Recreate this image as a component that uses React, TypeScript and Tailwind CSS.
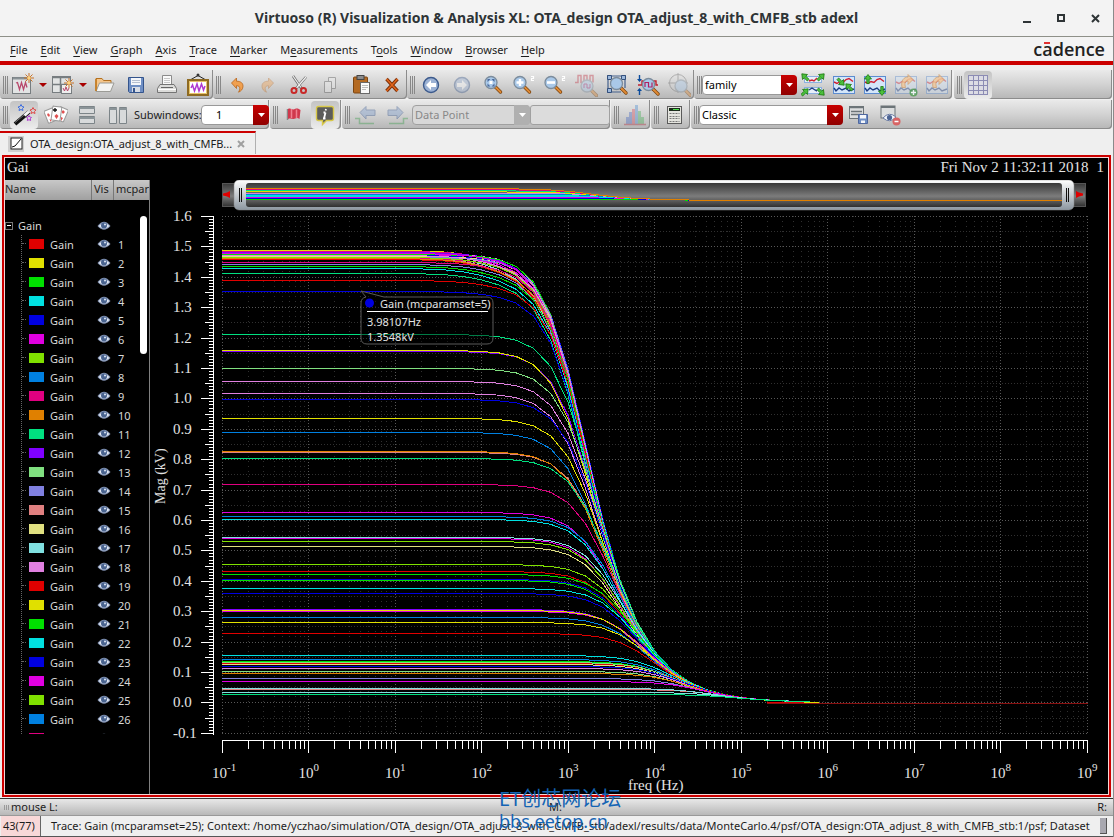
import type { ReactNode } from 'react'
import clsx from 'clsx'

const menus = [
  ['', 'F', 'ile'],
  ['', 'E', 'dit'],
  ['', 'V', 'iew'],
  ['', 'G', 'raph'],
  ['', 'A', 'xis'],
  ['', 'T', 'race'],
  ['', 'M', 'arker'],
  ['M', 'e', 'asurements'],
  ['T', 'o', 'ols'],
  ['', 'W', 'indow'],
  ['', 'B', 'rowser'],
  ['', 'H', 'elp'],
]

const palette = [
  '#e00000', '#e0e000', '#00e000', '#00e0e0', '#0000e0', '#e000e0', '#80e000', '#0080e0', '#e00080',
  '#e08000', '#00e080', '#8000ff', '#80e080', '#8080e0', '#e08080', '#e0e080', '#80e0e0', '#e080e0',
]

const traces = Array.from({ length: 27 }, (_, i) => ({ id: i + 1, color: palette[i % palette.length] }))

/* ---------- icons ---------- */

function Glyph({ children, faded }: { children: ReactNode; faded?: boolean }) {
  return (
    <svg width="24" height="24" viewBox="0 0 24 24" fill="none" aria-hidden="true" className={clsx('shrink-0', faded && 'opacity-40')}>
      {children}
    </svg>
  )
}

const Spark = ({ x, y }: { x: number; y: number }) => (
  <g transform={`translate(${x} ${y})`}>
    <path d="M0-5V5M-5 0H5M-3.500-3.500L3.500 3.500M3.500-3.500L-3.500 3.500" stroke="#c8732a" />
    <circle r="1.800" fill="#ffd27a" />
  </g>
)

const NewWindowIcon = () => (
  <Glyph>
    <rect x="1.500" y="4.500" width="18" height="16" fill="#e2e4e4" stroke="#777d80" />
    <path d="M2 5.500h17" stroke="#8a9296" strokeWidth="2" />
    <path d="M5 10l1.500-.5 2 7 2-7 2 7 2-7 1.500 5" stroke="#b8486c" strokeWidth="1.300" />
    <Spark x={18} y={5} />
  </Glyph>
)

const NewSubwindowIcon = () => (
  <Glyph>
    <rect x="1.500" y="3.500" width="18" height="16" fill="#e2e4e4" stroke="#777d80" />
    <path d="M2 4.500h17M2 11.500h17M9.500 4v15" stroke="#777d80" strokeWidth="1.500" />
    <rect x="10.500" y="11.500" width="10" height="9" fill="#eee" stroke="#777d80" />
    <path d="M12 15l1.500 3 1.500-4 1.500 4 1.500-3" stroke="#b8486c" />
    <Spark x={18} y={10} />
  </Glyph>
)

const FolderIcon = () => (
  <Glyph>
    <path d="M3 18V5.500h6l1.500 2H18V10" fill="#f4c58a" stroke="#b4701e" />
    <path d="M3 18.500L6.500 10H21l-3.500 8.500z" fill="#f3f3f1" stroke="#9b9b96" />
    <path d="M3 18V6" stroke="#c57a1c" strokeWidth="1.500" />
  </Glyph>
)

const SaveIcon = () => (
  <Glyph>
    <path d="M4.500 4.500h15v15h-14l-1-1z" fill="#6f8fc4" stroke="#34548c" />
    <rect x="7" y="5" width="10" height="7" fill="#f4f6fa" />
    <path d="M8 7.500h8M8 9.500h8" stroke="#b5bfd0" />
    <rect x="8" y="14" width="8" height="5" fill="#d8dde6" />
    <rect x="9" y="15" width="2" height="4" fill="#34548c" />
  </Glyph>
)

const PrinterIcon = () => (
  <Glyph>
    <path d="M7.500 12V2.500h9V12" fill="#fafafa" stroke="#8b8b8b" />
    <path d="M9 5.500h6M9 7.500h6M9 9.500h6" stroke="#c8c8c8" />
    <path d="M5 11.500h14l2.500 4v4h-19v-4z" fill="#dcdcda" stroke="#747474" />
    <path d="M3 16.500h18" stroke="#fff" />
    <path d="M6 14.500h12" stroke="#666" />
  </Glyph>
)

const WaveBoardIcon = () => (
  <Glyph>
    <path d="M5 6.500l7-4 7 4" stroke="#222" />
    <circle cx="12" cy="2" r="1.500" fill="#333" />
    <rect x="2" y="7" width="20" height="15" fill="#fff" stroke="#8e6a22" strokeWidth="2" />
    <rect x="3.500" y="8.500" width="17" height="12" stroke="#e8c468" />
    <path d="M5 15l1.500-3 2 6 2.500-7 2 7 2.500-7 2 6 1.500-4" stroke="#b03ad0" strokeWidth="1.500" />
  </Glyph>
)

const UndoIcon = ({ flip }: { flip?: boolean }) => (
  <Glyph faded={flip}>
    <g transform={flip ? 'translate(24 0) scale(-1 1)' : undefined}>
      <path d="M6.500 10l5-5v3.200c4.500 0 6.500 2 6.500 5 0 3-2 5-4.500 6 2-3 2-6.500-2-6.500V15.500z" fill="#f0a050" stroke="#b8641c" strokeWidth=".8" />
    </g>
  </Glyph>
)

const ScissorsIcon = () => (
  <Glyph>
    <path d="M6 3l8.500 12.500M19 4L9 15.500" stroke="#6c6c6c" strokeWidth="2.600" />
    <path d="M6 3l8 11.500M19 4L9.500 15" stroke="#f0f0f0" strokeWidth="1.200" />
    <circle cx="7" cy="17.500" r="2.500" stroke="#c82828" strokeWidth="2" />
    <circle cx="16.500" cy="17.500" r="2.500" stroke="#c82828" strokeWidth="2" />
  </Glyph>
)

const CopyIcon = () => (
  <Glyph faded>
    <path d="M10.500 4.500h7v11h-7z" fill="#eee" stroke="#555" />
    <path d="M6.500 8.500h7v11h-7z" fill="#eee" stroke="#555" />
  </Glyph>
)

const PasteIcon = () => (
  <Glyph>
    <rect x="4.500" y="4" width="14" height="16" rx="1" fill="#b46a22" stroke="#7c4510" />
    <rect x="8" y="2.500" width="7" height="4" fill="#8b8b8b" stroke="#444" />
    <rect x="11.500" y="9.500" width="9" height="11" fill="#fafafa" stroke="#6a6a6a" />
    <path d="M13 12.500h6M13 14.500h6M13 16.500h4" stroke="#bbb" />
  </Glyph>
)

const DeleteIcon = () => (
  <Glyph>
    <path d="M6.500 6l11 12M17.500 6l-11 12" stroke="#7a2f08" strokeWidth="3.400" />
    <path d="M6.500 6l11 12M17.500 6l-11 12" stroke="#e0641c" strokeWidth="1.600" />
  </Glyph>
)

const NavIcon = ({ forward }: { forward?: boolean }) => (
  <Glyph faded={forward}>
    <circle cx="12" cy="12" r="7.500" fill="#9cb2d4" stroke="#3c5a8c" strokeWidth="1.400" />
    <path d={forward ? 'M17 12l-5-5v3H7v4h5v3z' : 'M7 12l5-5v3h5v4h-5v3z'} fill="#fff" />
  </Glyph>
)

const Lens = ({ x = 10, y = 9.5, children }: { x?: number; y?: number; children?: ReactNode }) => (
  <>
    <path d={`M${x + 4.5} ${y + 4.5}l5 5`} stroke="#7c4510" strokeWidth="3.400" strokeLinecap="round" />
    <path d={`M${x + 5} ${y + 5}l4.500 4.500`} stroke="#e08a34" strokeWidth="1.800" strokeLinecap="round" />
    <circle cx={x} cy={y} r="6" fill="#a9c8e8" stroke="#7c8c9c" strokeWidth="1.300" />
    {children}
  </>
)

const Squared = () => (
  <path d="M19 3.500h2.500v2h-2v2H22" stroke="#fff" strokeWidth="1.200" />
)

const ZoomFitIcon = () => (
  <Glyph>
    <Lens>
      <path d="M6.500 9l3-3h-3zM13.500 9V6h-3zM6.500 10.500v3h3zM13.500 10.500v3h-3z" fill="#4c6a9c" />
      <rect x="8.500" y="8" width="3" height="3" fill="#fff" />
    </Lens>
  </Glyph>
)

const ZoomInIcon = () => (
  <Glyph>
    <Lens x={8}><path d="M8 6v7M4.500 9.500h7" stroke="#fff" strokeWidth="2.400" /></Lens>
    <Squared />
  </Glyph>
)

const ZoomOutIcon = () => (
  <Glyph>
    <Lens x={8}><path d="M4 9.500h8" stroke="#fff" strokeWidth="2.600" /></Lens>
    <Squared />
  </Glyph>
)

const ZoomWaveIcon = () => (
  <Glyph faded>
    <path d="M1 9.500h3v-7h3v7h3v-7h3v7h3v-7h3v7" stroke="#c03040" strokeWidth="1.400" />
    <Lens x={13} y={13}><path d="M10 15v-4h3v4h3v-4" stroke="#a02070" /></Lens>
  </Glyph>
)

const ZoomAreaIcon = () => (
  <Glyph>
    <path d="M3 2v18M20 2v13M2 3h19M2 19h14" stroke="#44608c" strokeWidth="1.200" />
    <path d="M2.500 2.500h4v4h-4zM16.500 2.500h4v4h-4zM2.500 15.500h4v4h-4z" fill="#9cb8dc" stroke="#34507c" />
    <Lens x={11.5} y={10.5} />
  </Glyph>
)

const ZoomAxisIcon = () => (
  <Glyph>
    <path d="M3.500 2v6M3.500 22v-6" stroke="#0c4c9c" strokeWidth="1.400" />
    <path d="M1 6h5l-2.500 3zM1 18h5l-2.500-3z" fill="#0c4c9c" />
    <path d="M2 12h4V8h4M17 8h3v4h2" stroke="#c02030" strokeWidth="1.400" />
    <Lens x={12.5} y={11.5}><path d="M9 14V9.500h3.500V14H16V9.500" stroke="#b02060" strokeWidth="1.200" /></Lens>
  </Glyph>
)

const ZoomTargetIcon = () => (
  <Glyph faded>
    <circle cx="11" cy="10" r="8.500" stroke="#666" />
    <path d="M11 0v20M1 10h20" stroke="#666" />
    <Lens x={14} y={13} />
  </Glyph>
)

const StripBox = () => (
  <>
    <rect x="1.500" y="3.500" width="21" height="17" fill="#d4e6fa" stroke="#5c8cd0" />
    <path d="M2 9l3 1.500 3-2 3 1 3-3 3-1 4 3" stroke="#d02030" strokeWidth="1.400" />
    <path d="M2 15l2 3 3-3 3 2 4-2 3 3 5-2" stroke="#1c3c84" strokeWidth="1.400" />
  </>
)

const Arrow = ({ x, y, angle }: { x: number; y: number; angle: number }) => (
  <path transform={`translate(${x} ${y}) rotate(${angle})`} d="M0-4.500L3.500 0H1.200V4.500h-2.400V0h-2.300z" fill="#4cc03c" stroke="#1c7812" strokeWidth=".8" />
)

const StripSplitIcon = () => (
  <Glyph>
    <rect x="3.500" y="3.500" width="17" height="6" fill="#e8effa" stroke="#8cb0e0" />
    <rect x="3.500" y="14.500" width="17" height="6" fill="#e8effa" stroke="#8cb0e0" />
    <path d="M8 8l3-1 2 1 3-3" stroke="#d02030" strokeWidth="1.400" />
    <path d="M8 17l3-2 3 2 2 1" stroke="#1c3c84" strokeWidth="1.400" />
    <Arrow x={4} y={4} angle={-45} />
    <Arrow x={20} y={4} angle={45} />
    <Arrow x={4} y={19} angle={45} />
    <Arrow x={20} y={19} angle={135} />
  </Glyph>
)

const StripMergeIcon = () => (
  <Glyph>
    <StripBox />
    <Arrow x={9} y={9} angle={135} />
    <Arrow x={17} y={14} angle={-45} />
  </Glyph>
)

const StripSwapIcon = () => (
  <Glyph>
    <StripBox />
    <Arrow x={5} y={6} angle={0} />
    <Arrow x={19} y={18} angle={180} />
  </Glyph>
)

const ReloadIcon = ({ add }: { add?: boolean }) => (
  <Glyph>
    <g opacity=".4">
      <StripBox />
    </g>
    <path opacity=".7" d="M8 14.500c-1.500-7 2-10.500 6-10.500V1.500l5 5-5 5V8c-3.500 0-3.500 2.500-2.500 6.500z" fill="#f6c48c" stroke="#cc8c4c" strokeWidth=".8" />
    {add && (
      <g opacity=".75">
        <circle cx="19.500" cy="19.500" r="4" fill="#4c9c4c" />
        <path d="M19.500 17v5M17 19.500h5" stroke="#fff" strokeWidth="1.400" />
      </g>
    )}
  </Glyph>
)

const GridIcon = () => (
  <Glyph>
    <rect x="2.500" y="2.500" width="19" height="19" fill="#dcdce4" stroke="#8c8cb4" />
    <path d="M2.500 7.500h19M2.500 12.500h19M2.500 17.500h19M7.500 2.500v19M12.500 2.500v19M17.500 2.500v19" stroke="#8c8cb4" />
  </Glyph>
)

const WandIcon = () => (
  <Glyph>
    <path d="M3 21L17 9" stroke="#111" strokeWidth="4" />
    <path d="M12.500 12.500L17 8.500" stroke="#f4f4f4" strokeWidth="3" />
    <path d="M3 19.500L12 12" stroke="#777" />
    <path d="M9 1.500l1 2 2 .5-1.500 1.500.5 2-2-1-2 1 .5-2L6 4l2-.5z" stroke="#3c6ce0" />
    <path d="M21 4.500l1 2 2 .5-1.500 1.500.5 2-2-1-2 1 .5-2L18 7l2-.5z" stroke="#e04848" />
    <path d="M17 12.500l.8 1.500 1.700.5-1.200 1.200.3 1.800-1.600-.8-1.600.8.3-1.800-1.200-1.200 1.700-.5z" stroke="#b03cd0" />
  </Glyph>
)

const CardsIcon = () => (
  <Glyph>
    <rect x="2" y="6" width="10" height="13" rx="1" transform="rotate(-22 7 13)" fill="#fff" stroke="#999" />
    <rect x="13" y="5" width="9" height="13" rx="1" transform="rotate(24 18 12)" fill="#fff" stroke="#999" />
    <rect x="8" y="3.500" width="9" height="14" rx="1" transform="rotate(8 12 10)" fill="#fff" stroke="#999" />
    <path d="M11 5v4M9 7h4" stroke="#111" strokeWidth="1.300" />
    <path d="M4 10l2 2-1 2-2-2zM5.500 16l2 1-1 2zM19 7l2 2-2 2-1.500-2zM17 14l2 1-2 3zM12.500 11l2 2-2 3-2-3z" fill="#e05050" />
  </Glyph>
)

const RowsIcon = () => (
  <Glyph>
    <path d="M4.500 3.500h15v7h-15zM4.500 13.500h15v7h-15z" fill="#d8dadb" stroke="#7c8488" />
    <path d="M4 5h16M4 15h16" stroke="#8b9498" strokeWidth="2" />
  </Glyph>
)

const ColumnsIcon = () => (
  <Glyph>
    <path d="M3.500 4.500h7v16h-7zM13.500 4.500h7v16h-7z" fill="#d8dadb" stroke="#7c8488" />
    <path d="M3 6h8M13 6h8" stroke="#8b9498" strokeWidth="2" />
  </Glyph>
)

const FlagIcon = () => (
  <Glyph>
    <path d="M5.500 6v11" stroke="#888" strokeWidth="1.500" />
    <path d="M6 6c3-1.500 4 1.500 7 0 2-1 4 0 5.500 1l-1 9c-3-2-4 0-6 0s-3-1-5.500 0z" fill="#d0384c" />
    <path d="M9.500 6v9M14.500 6.500V15" stroke="#f08090" strokeWidth="1.500" />
  </Glyph>
)

const InfoIcon = () => (
  <Glyph>
    <path d="M5.500 3.500h13q2 0 2 2v10q0 2-2 2h-5l-4 4v-4h-4q-2 0-2-2v-10q0-2 2-2z" fill="#5c5c5a" stroke="#d8c848" strokeWidth="1.400" />
    <path d="M13 6l-.4 1.500M12.500 9.500l-1.500 6M10.500 9.500h2M10 15.500h2.500" stroke="#fff" strokeWidth="1.800" />
  </Glyph>
)

const StepIcon = ({ forward }: { forward?: boolean }) => (
  <Glyph faded>
    <g transform={forward ? 'translate(24 0) scale(-1 1)' : undefined}>
      <path d="M6 9.500l6-6V7h9v5.500h-9V16z" fill="#7c9ccc" stroke="#34548c" />
      <path d="M1 15.500h4.500v5H20" stroke="#3c9c4c" strokeWidth="1.500" />
    </g>
  </Glyph>
)

const HistogramIcon = () => (
  <Glyph faded>
    <path d="M3 14h3v7H3zM6 9h3v12H6z" fill="#4c6cc0" />
    <path d="M9 6h3v15H9z" fill="#d05060" />
    <path d="M12 2h3v19h-3z" fill="#4c8cd0" />
    <path d="M15 8h3v13h-3zM18 14h3v7h-3z" fill="#4cb05c" />
    <path d="M1 21.500h22" stroke="#b03040" strokeWidth="1.500" />
  </Glyph>
)

const CalculatorIcon = () => (
  <Glyph>
    <rect x="4.500" y="3.500" width="14" height="17" fill="#e4e4de" stroke="#5a5a5a" />
    <rect x="6" y="5" width="11" height="3" fill="#1c2c1c" />
    <path d="M10 6.500h6" stroke="#4ce04c" />
    <path d="M6.500 10.500h10M6.500 13.500h10M6.500 15.500h10M6.500 18.500h10" stroke="#777" strokeDasharray="2 1" />
  </Glyph>
)

const PanelSaveIcon = () => (
  <Glyph>
    <rect x="2.500" y="3.500" width="14" height="12" fill="#dcdedf" stroke="#6c7478" />
    <path d="M2 4.500h15M4 8.500h11M4 11.500h11" stroke="#6c7478" strokeWidth="1.300" />
    <path d="M11.500 11.500h9v9h-9z" fill="#6f8fc4" stroke="#5068a0" />
    <path d="M13 12h6v3.500h-6zM14 17.500h4V20h-4z" fill="#f4f6fa" />
  </Glyph>
)

const PanelHideIcon = () => (
  <Glyph>
    <rect x="3" y="3" width="14" height="12" fill="#dcdedf" stroke="#6c7478" />
    <path d="M3 4h14" stroke="#6c7478" strokeWidth="2" />
    <path d="M5 15q6-7 13-1-6 7-13 1z" fill="#f0f4fa" stroke="#6c7ca4" />
    <circle cx="11.500" cy="14.500" r="2.600" fill="#4c6494" />
    <circle cx="18.500" cy="18.500" r="4" fill="#d86464" />
    <path d="M16.500 18.500h4" stroke="#fff" strokeWidth="1.500" />
  </Glyph>
)

const EyeIcon = () => (
  <svg width="14" height="12" viewBox="0 0 14 12" aria-hidden="true" className="shrink-0">
    <path d="M.5 6Q7-2.500 13.500 6 7 13.500.5 6z" fill="#8494b4" />
    <path d="M1.500 6Q7 .5 12.500 6 7 11 1.500 6z" fill="#e4e9f2" />
    <circle cx="7" cy="5.500" r="3" fill="#4a6490" />
    <circle cx="8" cy="4.500" r="1" fill="#dce6f6" />
  </svg>
)

/* ---------- toolbar parts ---------- */

function ToolGroup({ children, grow }: { children: ReactNode; grow?: boolean }) {
  return (
    <div
      className={clsx(
        'flex h-[29px] items-center rounded-b-[4px] bg-gradient-to-b from-[#eaeaea] via-[#d2d2d2] to-[#b6b6b6] pl-[3px] shadow-[inset_-1px_-1px_0_#8c8c8c]',
        grow && 'flex-1'
      )}
    >
      <span className="h-[18px] w-[5px] shrink-0 border-x border-[#888] bg-[linear-gradient(90deg,transparent_1px,#888_1px,#888_2px,transparent_2px)]" />
      {children}
    </div>
  )
}

function Tool({ label, children, on, wide = true }: { label: string; children: ReactNode; on?: boolean; wide?: boolean }) {
  return (
    <button
      type="button"
      aria-label={label}
      className={clsx(
        'flex h-7 shrink-0 items-center justify-center',
        wide && !on ? 'w-[31px]' : 'w-7',
        on && 'mx-[2px] rounded-[4px] bg-gradient-to-b from-[#c4c4c4] to-[#ececec]'
      )}
    >
      {children}
    </button>
  )
}

function MenuArrow({ label }: { label: string }) {
  return (
    <button type="button" aria-label={label} className="flex h-7 w-3 shrink-0 items-center justify-center">
      <svg width="8" height="4" viewBox="0 0 8 4" aria-hidden="true">
        <path d="M0 0h8L4 4z" fill="#a80000" />
      </svg>
    </button>
  )
}

function Combo({ label, value, className, disabled, inset }: { label: string; value: string; className: string; disabled?: boolean; inset?: boolean }) {
  return (
    <div className={clsx('relative h-5 shrink-0', className)}>
      <select
        aria-label={label}
        disabled={disabled}
        defaultValue={value}
        className={clsx(
          'h-5 w-full appearance-none rounded-[4px] border pr-4',
          inset ? 'pl-[14px]' : 'pl-[2px]',
          disabled ? 'border-[#a0a0a0] bg-[#d8d8d8] text-[#888]' : 'border-[#999] bg-white text-black'
        )}
      >
        <option>{value}</option>
      </select>
      <span
        className={clsx(
          'pointer-events-none absolute top-0 right-0 flex h-5 w-4 items-center justify-center rounded-r-[4px]',
          disabled ? 'bg-[#b0b0b0]' : 'bg-gradient-to-b from-[#c80000] to-[#900000]'
        )}
      >
        <svg width="7" height="4" viewBox="0 0 7 4" aria-hidden="true">
          <path d="M0 0h7L3.500 4z" fill="#fff" />
        </svg>
      </span>
    </div>
  )
}

/* ---------- chart ---------- */

const X0 = 222
const DECADE = 86.5
const ZERO_Y = 702.5
const UNIT = 304

// [row of the flat part, colour, extra droop before the pole]
const curves: [number, string, number][] = [
  [250.5, '#e0e000', 0.03], [251.5, '#e00080', 0.02], [252.5, '#8000ff', 0.012], [253.5, '#e000e0', 0.03],
  [254.5, '#e000e0', 0.02], [254.5, '#e080e0', 0], [255.5, '#0000e0', 0.01], [254.5, '#00e000', 0.002],
  [256.5, '#80e0e0', 0.03], [257.5, '#e08080', 0.035], [256.5, '#e0e080', 0.006], [258.5, '#e00080', 0.014],
  [257.5, '#8080e0', 0.004], [259.5, '#e00000', 0.03], [258.5, '#e08000', 0.034], [257.5, '#80e000', 0.02],
  [253.5, '#e000e0', 0.012], [255.5, '#e080e0', 0.024],
  [262.5, '#e00080', 0.012], [264.5, '#8080e0', 0.02], [266.5, '#00e000', 0.026], [268.5, '#00e0e0', 0.03],
  [273.5, '#00e080', 0.026], [280.5, '#e00000', 0.016], [291.5, '#0000e0', 0.008], [334.5, '#00e080', 0],
  [351.5, '#8000ff', 0], [350.5, '#e0e000', 0], [368.5, '#80e080', 0], [381.5, '#e080e0', 0],
  [393.5, '#e080e0', 0], [399.5, '#0000e0', 0], [418.5, '#e0e000', 0], [432.5, '#0080e0', 0],
  [452.5, '#e08080', 0], [451.5, '#e08000', 0], [458.5, '#00e080', 0], [484.5, '#e00080', 0],
  [512.5, '#e000e0', 0], [516.5, '#0080e0', 0], [519.5, '#00e0e0', 0], [538.5, '#e000e0', 0],
  [537.5, '#80e0e0', 0], [541.5, '#80e000', 0], [546.5, '#e0e080', 0], [564.5, '#80e000', 0],
  [571.5, '#e00000', 0], [574.5, '#00e000', 0], [579.5, '#0000e0', 0], [580.5, '#00e000', 0],
  [588.5, '#00e0e0', 0], [593.5, '#0000e0', 0], [609.5, '#8000ff', 0], [611.5, '#e000e0', 0],
  [610.5, '#e0e000', 0], [617.5, '#0080e0', 0], [622.5, '#e0e000', 0], [633.5, '#e00000', 0],
  [655.5, '#00e0e0', 0], [659.5, '#0080e0', 0], [661.5, '#00e000', 0], [663.5, '#e00000', 0],
  [662.5, '#80e080', 0], [664.5, '#e0e080', 0], [666.5, '#0000e0', 0], [668.5, '#e080e0', 0],
  [671.5, '#80e080', 0], [673.5, '#e08000', 0], [678.5, '#8080e0', 0], [681.5, '#e000e0', 0],
  [689.5, '#e08080', 0], [688.5, '#80e0e0', 0], [692.5, '#80e0e0', 0], [694.5, '#00e080', 0],
]

// single pole gain in kV, f in kHz
function gain(a0: number, gbw: number, droop: number, exp: number) {
  const f = 10 ** (exp - 3)
  const extra = 1 - (droop * f * f) / (f * f + 0.0144)
  return extra / Math.sqrt(1 / (a0 * a0) + (f / gbw) ** 2)
}

function curvePoints(row: number, droop: number, index: number) {
  const a0 = (ZERO_Y - row) / UNIT
  const gbw = 1.54 + ((index * 7) % 11) * 0.017
  const pts: string[] = []
  for (let k = -5; k <= 29; k++) {
    const exp = k / 5
    pts.push(`${X0 + (exp + 1) * DECADE},${ZERO_Y - gain(a0, gbw, droop, exp) * UNIT}`)
  }
  return pts.join(' ')
}

const overview = ['#00e000', '#0000e0', '#e000e0', '#00e0e0', '#00e0e0', '#0080e0', '#e080e0', '#e0e000', '#00e080', '#e00080', '#e08000']

function overviewPoints(row: number) {
  const a0 = row / 7.5
  const pts: string[] = []
  for (let k = -5; k <= 45; k++) {
    const exp = k / 5
    pts.push(`${246 + (exp + 1) * 81.6},${200.5 - gain(a0, 1.65, 0, exp) * 8}`)
  }
  return pts.join(' ')
}

const decades = Array.from({ length: 11 }, (_, i) => i - 1)
const logTicks = decades.slice(0, -1).flatMap((d) => [2, 3, 4, 5, 6, 7, 8, 9].map((m) => X0 + (d + 1 + Math.log10(m)) * DECADE))
const yHundredths = Array.from({ length: 171 }, (_, i) => i - 10)
const rowOf = (v: number) => Math.floor(702.9 - v * 3.04) + 0.5

function GainChart() {
  return (
    <svg
      viewBox="150 180 958 614"
      className="block h-auto w-full"
      role="img"
      aria-label="Gain magnitude against frequency"
      fontFamily="Liberation Serif, serif"
      fontSize="15"
      fill="#e4e4e4"
    >
      <defs>
        <linearGradient id="track" x1="0" y1="0" x2="0" y2="1">
          <stop offset="0" stopColor="#383838" />
          <stop offset=".55" stopColor="#7c7c7c" />
          <stop offset="1" stopColor="#303030" />
        </linearGradient>
        <linearGradient id="frame" x1="0" y1="0" x2="0" y2="1">
          <stop offset="0" stopColor="#fff" />
          <stop offset="1" stopColor="#8c96a0" />
        </linearGradient>
      </defs>

      {/* range slider with a small copy of the traces */}
      <rect x="222.500" y="183.500" width="863" height="23" fill="url(#track)" stroke="#555" />
      <path d="M230 191v7l-3-1.500-4-1v-2l4-1z" fill="#e00000" />
      <path d="M1076 191v7l3-1.500 4-1v-2l-4-1z" fill="#e00000" />
      <rect x="234" y="180" width="840" height="30" rx="5" fill="url(#frame)" stroke="#888" strokeWidth=".5" />
      <rect x="246" y="183" width="816" height="24" rx="3" fill="url(#track)" />
      <path d="M239.500 188v14M241.500 188v14M1066.500 188v14M1068.500 188v14" stroke="#111" shapeRendering="crispEdges" />
      <g fill="none" shapeRendering="crispEdges">
        {overview.map((color, i) => (
          <polyline key={i} points={overviewPoints(i + 1)} stroke={color} />
        ))}
      </g>

      {/* grid */}
      <g shapeRendering="crispEdges" strokeDasharray="1 2">
        {logTicks.map((x) => (
          <path key={x} d={`M${Math.floor(x) + 0.5} 216V733`} stroke="#303030" strokeDasharray="1 4" />
        ))}
        {yHundredths.filter((v) => v % 5 === 0).map((v) => (
          <path key={v} d={`M222 ${rowOf(v)}H1087`} stroke={v % 10 === 0 ? '#585858' : '#303030'} />
        ))}
        {decades.map((d) => (
          <path key={d} d={`M${Math.floor(X0 + (d + 1) * DECADE) + 0.5} 216V733`} stroke="#585858" />
        ))}
      </g>

      {/* axes */}
      <g stroke="#fff" shapeRendering="crispEdges">
        <path d="M213.500 216V735M222 740.500H1088" />
        {yHundredths.map((v) => (
          <path key={v} d={`M${v % 10 === 0 ? 201 : v % 5 === 0 ? 205 : 209} ${rowOf(v)}H214`} />
        ))}
        {logTicks.map((x) => (
          <path key={x} d={`M${Math.floor(x) + 0.5} 740V749`} />
        ))}
        {decades.map((d) => (
          <path key={d} d={`M${Math.floor(X0 + (d + 1) * DECADE) + 0.5} 740V753`} />
        ))}
      </g>
      {yHundredths.filter((v) => v % 10 === 0).map((v) => (
        <text key={v} x="173" y={Math.floor(707.9 - v * 3.04)}>{(v / 100).toFixed(1)}</text>
      ))}
      {decades.map((d) => (
        <text key={d} x={X0 + (d + 1) * DECADE - 10} y="778">
          10<tspan dy="-7" fontSize="11">{d}</tspan>
        </text>
      ))}
      <text x="628" y="790">freq (Hz)</text>
      <text transform="translate(165 504) rotate(-90)" fontSize="14">Mag (kV)</text>

      {/* traces */}
      <g fill="none" shapeRendering="crispEdges">
        <path d="M767 703.500H1088" stroke="#8a1010" />
        {curves.map(([row, color, droop], i) => (
          <polyline key={i} points={curvePoints(row, droop, i)} stroke={color} />
        ))}
        <path d="M767 702.500h37" stroke="#e00000" />
        <path d="M804 702.500h15" stroke="#e0e000" />
      </g>

      {/* trace tooltip */}
      <path
        d="M361 291l23 6h103q6 0 6 6v35q0 6-6 6H367q-6 0-6-6v-35q0-5 5-6z"
        fill="#000"
        fillOpacity=".45"
        stroke="#5a5a5a"
      />
      <circle cx="369.500" cy="303" r="4.500" fill="#0000e0" />
      <path d="M367 311.500h121" stroke="#fff" shapeRendering="crispEdges" />
      <g fontFamily="Noto Sans, sans-serif" fontSize="11">
        <text x="380" y="308">Gain (mcparamset=5)</text>
        <text x="367" y="326">3.98107Hz</text>
        <text x="367" y="341">1.3548kV</text>
      </g>
    </svg>
  )
}

function TraceList() {
  return (
    <aside className="w-[145px] shrink-0 border-r border-[#808080]">
      <div className="flex h-5 items-center overflow-hidden bg-gradient-to-b from-[#c8c8c8] to-[#a0a0a0] text-[#222]">
        <span className="h-5 w-[87px] border-r border-[#777]">Name</span>
        <span className="h-5 w-[22px] border-r border-[#777] pl-[2px]">Vis</span>
        <span className="h-5 flex-1 overflow-hidden pl-[2px]">mcpar</span>
      </div>
      <div className="relative mt-4 h-[518px] overflow-hidden text-[#d8d8d8]">
        <div className="flex h-[19px] items-center">
          <button type="button" aria-label="Collapse Gain" className="flex size-2 items-center justify-center border border-[#777]">
            <span className="h-px w-1 bg-white" />
          </button>
          <span className="w-[79px] pl-[5px]">Gain</span>
          <span className="ml-[5px]"><EyeIcon /></span>
        </div>
        <ul className="ml-4 border-l border-dotted border-[#666]">
          {traces.map((trace) => (
            <li key={trace.id} className="flex h-[19px] items-start">
              <span className="mt-2 w-1 shrink-0 border-t border-dotted border-[#666]" />
              <span className="mt-1 ml-[3px] h-[10px] w-[15px] shrink-0" style={{ backgroundColor: trace.color }} />
              <span className="w-[53px] shrink-0 pl-[6px] leading-[19px]">Gain</span>
              <span className="mt-[3px]"><EyeIcon /></span>
              <span className="pl-[7px] leading-[19px]">{trace.id}</span>
            </li>
          ))}
        </ul>
        <div className="absolute top-0 right-[2px] h-[138px] w-[7px] rounded-full bg-white" />
      </div>
    </aside>
  )
}

export default function App() {
  return (
    <div className="w-full border-r border-[#8a8a8a] bg-[#efefef] font-['Noto_Sans',sans-serif] text-[11px] leading-[18px] text-[#1c1c1c]">
      {/* Title bar */}
      <header className="relative flex h-[37px] items-center justify-center border-b border-[#8e9088] bg-[#f3f3f3]">
        <h1 className="text-[14px] font-bold text-[#2e3436]">
          Virtuoso (R) Visualization &amp; Analysis XL: OTA_design OTA_adjust_8_with_CMFB_stb adexl
        </h1>
        <div className="absolute right-2 flex h-6 items-center gap-[14px] text-[#2e3436]">
          <button type="button" aria-label="Minimize" className="flex size-5 items-end justify-center pb-[5px]">
            <span className="h-[2px] w-2 bg-current" />
          </button>
          <button type="button" aria-label="Maximize" className="flex size-5 items-center justify-center">
            <span className="size-2 border-2 border-current" />
          </button>
          <button type="button" aria-label="Close" className="flex size-5 items-center justify-center">
            <svg width="9" height="9" viewBox="0 0 9 9" aria-hidden="true">
              <path d="M1 1l7 7M8 1L1 8" stroke="currentColor" strokeWidth="2" />
            </svg>
          </button>
        </div>
      </header>

      {/* Menu bar */}
      <nav className="flex h-7 items-center border-b-4 border-[#cc0000] bg-[#f3f3f3] pr-2 pl-[10px]">
        <div className="flex flex-1 gap-[13px] pt-[2px]">
          {menus.map(([head, key, tail]) => (
            <button type="button" key={head + key + tail}>
              {head}
              <span className="underline underline-offset-2">{key}</span>
              {tail}
            </button>
          ))}
        </div>
        <span className="font-['Open_Sans',sans-serif] text-[18px] font-semibold text-[#222]">
          c
          <span className="relative">
            a<span className="absolute top-[5px] left-[2px] h-[2px] w-[6px] bg-[#e03030]" />
          </span>
          dence
        </span>
      </nav>

      {/* Toolbars */}
      <div className="flex pt-[5px] pr-px">
        <ToolGroup>
          <span className="flex w-[29px] justify-center"><Tool label="New window" wide={false}><NewWindowIcon /></Tool></span>
          <MenuArrow label="New window options" />
          <Tool label="New subwindow" wide={false}><NewSubwindowIcon /></Tool>
          <MenuArrow label="New subwindow options" />
          <Tool label="Open"><FolderIcon /></Tool>
          <Tool label="Save"><SaveIcon /></Tool>
          <Tool label="Print"><PrinterIcon /></Tool>
          <Tool label="Save image"><WaveBoardIcon /></Tool>
        </ToolGroup>
        <ToolGroup>
          <Tool label="Undo"><UndoIcon /></Tool>
          <Tool label="Redo"><UndoIcon flip /></Tool>
          <Tool label="Cut"><ScissorsIcon /></Tool>
          <Tool label="Copy"><CopyIcon /></Tool>
          <Tool label="Paste"><PasteIcon /></Tool>
          <Tool label="Delete"><DeleteIcon /></Tool>
        </ToolGroup>
        <ToolGroup>
          <Tool label="Previous view"><NavIcon /></Tool>
          <Tool label="Next view"><NavIcon forward /></Tool>
          <Tool label="Fit"><ZoomFitIcon /></Tool>
          <Tool label="Zoom in"><ZoomInIcon /></Tool>
          <Tool label="Zoom out"><ZoomOutIcon /></Tool>
          <Tool label="Fit smith"><ZoomWaveIcon /></Tool>
          <Tool label="Zoom area"><ZoomAreaIcon /></Tool>
          <Tool label="Zoom axis"><ZoomAxisIcon /></Tool>
          <Tool label="Zoom target"><ZoomTargetIcon /></Tool>
        </ToolGroup>
        <ToolGroup>
          <Combo label="Strip mode" value="family" className="w-[95px]" />
          <Tool label="Split strips"><StripSplitIcon /></Tool>
          <Tool label="Combine strips"><StripMergeIcon /></Tool>
          <Tool label="Swap strips"><StripSwapIcon /></Tool>
          <Tool label="Reload and add"><ReloadIcon add /></Tool>
          <Tool label="Reload"><ReloadIcon /></Tool>
        </ToolGroup>
        <span className="w-[2px]" />
        <ToolGroup grow>
          <Tool label="Grid" on><GridIcon /></Tool>
        </ToolGroup>
      </div>
      <div className="flex gap-px pt-px pr-px">
        <ToolGroup>
          <Tool label="Assistants" on><WandIcon /></Tool>
          <Tool label="Workspaces"><CardsIcon /></Tool>
          <Tool label="Rows"><RowsIcon /></Tool>
          <Tool label="Columns"><ColumnsIcon /></Tool>
          <span className="w-[68px] pl-px whitespace-nowrap">Subwindows:</span>
          <Combo label="Subwindows" value="1" className="w-[68px]" inset />
        </ToolGroup>
        <ToolGroup>
          <Tool label="Marker"><FlagIcon /></Tool>
          <Tool label="Trace info" on><InfoIcon /></Tool>
        </ToolGroup>
        <ToolGroup>
          <Tool label="Previous point"><StepIcon /></Tool>
          <Tool label="Next point"><StepIcon forward /></Tool>
          <Combo label="Step by" value="Data Point" className="w-[118px]" disabled />
          <input
            aria-label="Step value"
            disabled
            className="h-5 w-20 rounded-[3px] border border-[#a0a0a0] bg-[#dcdcdc]"
          />
        </ToolGroup>
        <ToolGroup>
          <Tool label="Histogram"><HistogramIcon /></Tool>
        </ToolGroup>
        <ToolGroup>
          <Tool label="Calculator"><CalculatorIcon /></Tool>
        </ToolGroup>
        <ToolGroup grow>
          <Combo label="Workspace" value="Classic" className="w-36" />
          <Tool label="Save workspace"><PanelSaveIcon /></Tool>
          <Tool label="Hide panels"><PanelHideIcon /></Tool>
        </ToolGroup>
      </div>

      {/* Document tab */}
      <div className="flex h-[26px] items-end pb-px">
        <div className="flex h-[23px] w-64 items-center border-t-2 border-r border-t-[#cc0000] border-r-[#b0b0b0] pl-2">
          <span className="mr-[6px] flex size-4 items-center justify-center bg-[#d0d0d0]">
            <svg width="13" height="13" viewBox="0 0 13 13" aria-hidden="true">
              <rect x="1" y="1" width="11" height="11" fill="#fff" stroke="#222" />
              <path d="M2 10l3-1 6-7" stroke="#111" fill="none" />
            </svg>
          </span>
          <span className="whitespace-nowrap">OTA_design:OTA_adjust_8_with_CMFB...</span>
          <button type="button" aria-label="Close tab" className="ml-[5px]">
            <svg width="8" height="8" viewBox="0 0 8 8" aria-hidden="true">
              <path d="M1 1l6 6M7 1L1 7" stroke="#a0a0a0" strokeWidth="2" />
            </svg>
          </button>
        </div>
      </div>

      {/* Graph window */}
      <main className="mr-[2px] ml-[2px] border-2 border-[#cc0000]">
        <div className="border border-[#f4d8d8] bg-black">
          <div className="flex h-[22px] items-start justify-between pr-1 pl-[2px] font-['Liberation_Serif',serif] text-[15px] text-[#e4e4e4]">
            <span>Gai</span>
            <span className="flex gap-2">
              <span>Fri Nov 2 11:32:11 2018</span>
              <span>1</span>
            </span>
          </div>
          <div className="flex">
            <TraceList />
            <div className="min-w-0 flex-1">
              <GainChart />
            </div>
          </div>
        </div>
      </main>

      {/* Status bars */}
      <footer className="relative mt-px border-t border-[#333]">
        <div className="grid h-[17px] grid-cols-3 items-center border-b border-[#999] bg-gradient-to-b from-[#e8e8e8] to-[#b8b8b8] pr-[6px] pl-1 leading-4">
          <span className="flex items-center gap-[2px]">
            <span className="h-[5px] w-[5px] border-x border-[#999] bg-[linear-gradient(90deg,transparent_1px,#999_1px,#999_2px,transparent_2px)]" />
            mouse L:
          </span>
          <span className="text-center">M:</span>
          <span className="text-right">R:</span>
        </div>
        <div className="flex h-[21px] items-center border-b border-[#555] pl-px">
          <span className="flex h-5 w-10 items-center border-r border-[#666] bg-[#f8d8d8] pl-[2px]">43(77)</span>
          <p className="min-w-0 flex-1 overflow-hidden pl-[10px] whitespace-nowrap">
            Trace: Gain (mcparamset=25); Context: /home/yczhao/simulation/OTA_design/OTA_adjust_8_with_CMFB_stb/adexl/results/data/MonteCarlo.4/psf/OTA_design:OTA_adjust_8_with_CMFB_stb:1/psf; Dataset
          </p>
          <span className="mr-[6px] h-4 w-[7px] border-r border-b border-[#555] bg-[#a8a8b0]" />
        </div>
        <div className="pointer-events-none absolute -top-[11px] left-[499px] text-[#1464b4]">
          <p className="font-['Noto_Sans','Noto_Sans_CJK_SC',sans-serif] text-[20px] leading-[22px]">ET创芯网论坛</p>
          <p className="text-[18px] leading-[22px]">bbs.eetop.cn</p>
        </div>
      </footer>
    </div>
  )
}
